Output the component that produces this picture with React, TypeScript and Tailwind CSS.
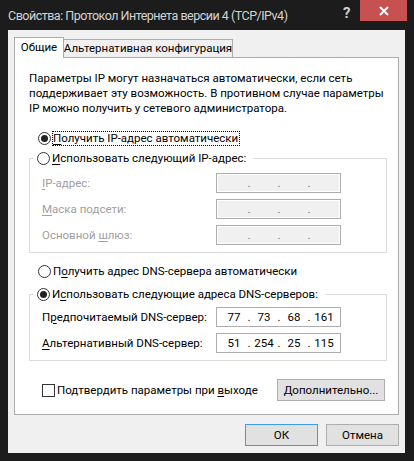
import React from "react";

const Key = ({ c }: { c: string }) => (
  <span className="underline underline-offset-[2px] decoration-[1px]">{c}</span>
);

const Radio = ({ checked }: { checked?: boolean }) => (
  <span className="w-[13px] h-[13px] rounded-full border border-[#333] bg-white flex items-center justify-center shrink-0">
    {checked && <span className="w-[7px] h-[7px] rounded-full bg-[#222]" />}
  </span>
);

const IpBox = ({ values, disabled }: { values: string[]; disabled?: boolean }) => (
  <div
    className={
      disabled
        ? "w-[125px] h-[20px] border border-[#adadad] bg-[#f0f0f0] shadow-[inset_0_0_0_1px_#ffffff] flex items-center pl-[4px] text-[#6d6d6d]"
        : "w-[125px] h-[20px] border border-[#abadb3] bg-white flex items-center pl-[4px] text-black"
    }
  >
    {values.map((v, i) => (
      <React.Fragment key={i}>
        {i > 0 && <span className="w-[4px] text-center">.</span>}
        <span className="w-[26px] text-center">{v}</span>
      </React.Fragment>
    ))}
  </div>
);

const FieldRow = ({
  label,
  values,
  disabled,
}: {
  label: React.ReactNode;
  values: string[];
  disabled?: boolean;
}) => (
  <div className="flex items-center h-[20px]">
    <div className={disabled ? "w-[174px] whitespace-nowrap text-[#a0a0a0]" : "w-[174px] whitespace-nowrap text-black"}>
      {label}
    </div>
    <IpBox values={values} disabled={disabled} />
  </div>
);

export default function App() {
  const empty = ["", "", "", ""];
  return (
    <div className="w-[414px] h-[461px] bg-[#1c1c1c] flex flex-col font-['Roboto',sans-serif] text-[11.5px] leading-[15px] text-black select-none whitespace-nowrap">
      {/* title bar */}
      <div className="flex h-[30px] shrink-0">
        <div className="flex-1 pl-[8px] pt-[6px] text-[12.5px] tracking-[-0.5px] leading-[20px] text-[#d4d4d4]">
          Свойства: Протокол Интернета версии 4 (TCP/IPv4)
        </div>
        <div className="w-[17px] pt-[3px] text-[15px] leading-[20px] font-bold text-[#cfcfcf]">?</div>
        <div className="w-[47px] h-[21px] bg-[#c75050] flex items-center justify-center mr-[7px]">
          <svg width="10" height="10" viewBox="0 0 10 10">
            <path d="M1 1 L9 9 M9 1 L1 9" stroke="#ffffff" strokeWidth="2" />
          </svg>
        </div>
      </div>

      {/* client area */}
      <div className="ml-[8px] w-[397px] h-[423px] bg-[#f0f0f0] flex flex-col px-[6px] pt-[7px]">
        {/* tabs */}
        <div className="flex items-end h-[20px]">
          <div className="relative z-10 w-[50px] h-[21px] mb-[-1px] border border-b-0 border-[#acacac] bg-white flex items-center justify-center pb-[2px]">
            Общие
          </div>
          <div className="ml-[-1px] w-[170px] h-[18px] border border-b-0 border-[#acacac] bg-[#f0f0f0] flex items-center justify-center">
            Альтернативная конфигурация
          </div>
        </div>

        {/* tab page */}
        <div className="w-[385px] h-[358px] border border-[#acacac] bg-white flex flex-col pl-[14px] pr-[11px] pt-[13px]">
          <p>
            Параметры IP могут назначаться автоматически, если сеть
            <br />
            поддерживает эту возможность. В противном случае параметры
            <br />
            IP можно получить у сетевого администратора.
          </p>

          <div className="flex items-center h-[15px] mt-[15px] pl-[9px]">
            <Radio checked />
            <span className="ml-[1px] border border-dotted border-black leading-[13px] pr-[1px]">
              <Key c="П" />
              олучить IP-адрес автоматически
            </span>
          </div>

          <fieldset className="mt-[5px] w-[358px] border border-[#dcdcdc] pl-[12px] pt-[7px] pb-[7px] flex flex-col gap-[6px]">
            <legend className="-ml-[8px] pl-[3px] pr-[7px]">
              <span className="flex items-center h-[15px]">
                <Radio />
                <span className="ml-[2px]">
                  <Key c="И" />
                  спользовать следующий IP-адрес:
                </span>
              </span>
            </legend>
            <FieldRow
              disabled
              values={empty}
              label={
                <>
                  <Key c="I" />
                  P-адрес:
                </>
              }
            />
            <FieldRow
              disabled
              values={empty}
              label={
                <>
                  <Key c="М" />
                  аска подсети:
                </>
              }
            />
            <FieldRow
              disabled
              values={empty}
              label={
                <>
                  Основной <Key c="ш" />
                  люз:
                </>
              }
            />
          </fieldset>

          <div className="flex items-center h-[15px] mt-[11px] pl-[9px]">
            <Radio />
            <span className="ml-[2px]">
              П<Key c="о" />
              лучить адрес DNS-сервера автоматически
            </span>
          </div>

          <fieldset className="mt-[8px] w-[358px] border border-[#dcdcdc] pl-[12px] pt-[5px] pb-[7px] flex flex-col gap-[6px]">
            <legend className="-ml-[8px] pl-[3px] pr-[7px]">
              <span className="flex items-center h-[15px]">
                <Radio checked />
                <span className="ml-[2px]">
                  И<Key c="с" />
                  пользовать следующие адреса DNS-серверов:
                </span>
              </span>
            </legend>
            <FieldRow
              values={["77", "73", "68", "161"]}
              label={
                <>
                  П<Key c="р" />
                  едпочитаемый DNS-сервер:
                </>
              }
            />
            <FieldRow
              values={["51", "254", "25", "115"]}
              label={
                <>
                  <Key c="А" />
                  льтернативный DNS-сервер:
                </>
              }
            />
          </fieldset>

          <div className="mt-[18px] flex items-center justify-between pl-[13px] pr-[2px]">
            <div className="flex items-center">
              <span className="w-[13px] h-[13px] border border-[#333] bg-white shrink-0" />
              <span className="ml-[2px]">
                Подтвердить параметры при <Key c="в" />
                ыходе
              </span>
            </div>
            <button className="w-[108px] h-[22px] border border-[#adadad] bg-[#e1e1e1] flex items-center justify-center">
              <span>
                <Key c="Д" />
                ополнительно...
              </span>
            </button>
          </div>
        </div>

        {/* dialog buttons */}
        <div className="mt-[9px] flex justify-end gap-[8px]">
          <button className="w-[73px] h-[22px] border border-[#3c9cf0] bg-[#e1e1e1] flex items-center justify-center">
            ОК
          </button>
          <button className="w-[73px] h-[22px] border border-[#adadad] bg-[#e1e1e1] flex items-center justify-center">
            Отмена
          </button>
        </div>
      </div>
    </div>
  );
}
